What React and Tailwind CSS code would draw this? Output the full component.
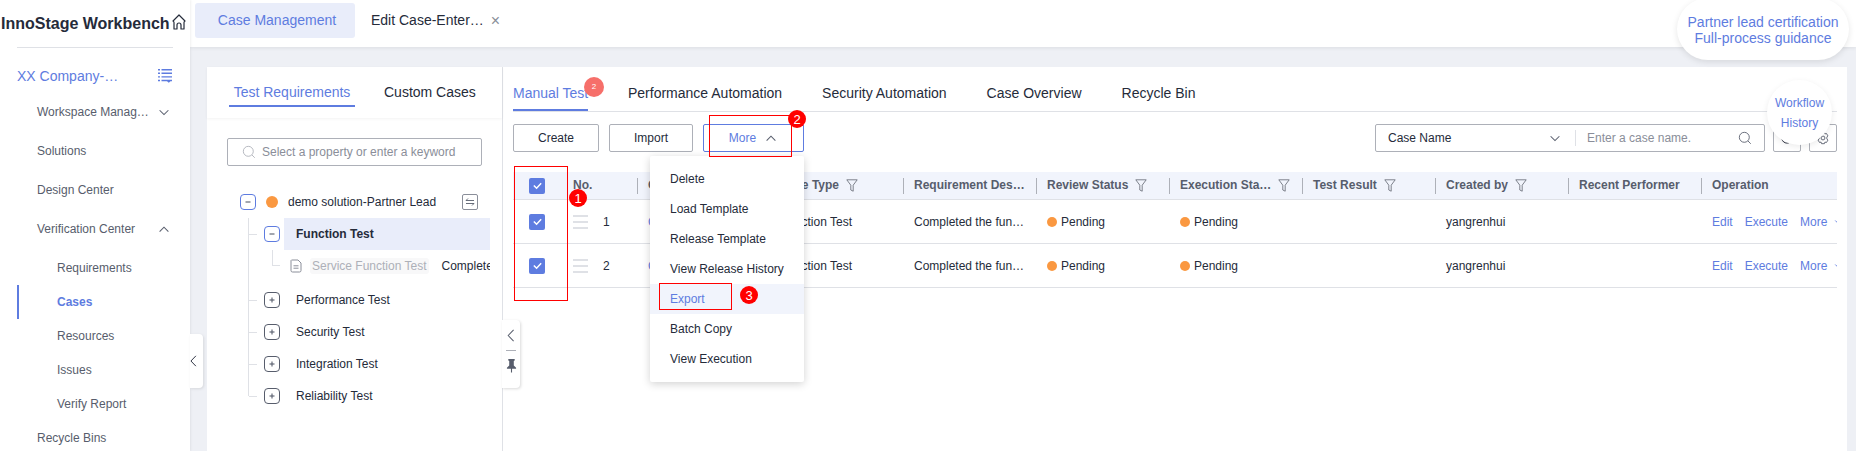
import React from "react";

const Chevron = ({ up, className = "" }) => (
  <svg viewBox="0 0 16 16" className={className} fill="none" stroke="currentColor" strokeWidth="1.2">
    <path d={up ? "M3 11 L8 6 L13 11" : "M3 6 L8 11 L13 6"} />
  </svg>
);

const TallLeft = ({ className = "" }) => (
  <svg viewBox="0 0 8 14" className={className} fill="none" stroke="currentColor" strokeWidth="1.1">
    <path d="M6.8 1 L1 7 L6.8 13" />
  </svg>
);

const Filter = () => (
  <svg viewBox="0 0 12 13" className="w-3 h-[13px] shrink-0 ml-[7px] text-[#71757f]" fill="none" stroke="currentColor" strokeWidth="0.9">
    <path d="M0.8 0.8 H11.2 L7.2 6.2 V12.2 L4.8 11 V6.2 Z" />
  </svg>
);

const Search = ({ className = "" }) => (
  <svg viewBox="0 0 16 16" className={className} fill="none" stroke="currentColor" strokeWidth="1">
    <circle cx="7.2" cy="7.2" r="5.7" />
    <path d="M11.4 11.4 L14.6 14.6" />
  </svg>
);

const Step = ({ n, className }) => (
  <div className={`absolute w-[18px] h-[18px] rounded-full bg-[#ff0000] text-white text-[13px] flex items-center justify-center leading-none ${className}`}>{n}</div>
);

const RedBox = ({ className }) => <div className={`absolute border border-[#ff0000] ${className}`} />;

const Check = () => (
  <div className="w-4 h-4 rounded-[2px] bg-[#5e7ce0] flex items-center justify-center shrink-0">
    <svg viewBox="0 0 12 12" className="w-[11px] h-[11px]" fill="none" stroke="white" strokeWidth="1.6">
      <path d="M2 6 L5 9 L10 3.5" />
    </svg>
  </div>
);

const Sidebar = () => (
  <div className="w-[190px] shrink-0 bg-white h-full flex flex-col shadow-[1px_0_2px_rgba(0,0,0,0.06)] relative z-20 overflow-hidden">
    <div className="h-[47px] shrink-0 flex items-center justify-between pl-[1px] pr-[4px]">
      <span className="text-[16px] font-bold text-[#252b3a] whitespace-nowrap">InnoStage Workbench</span>
      <svg viewBox="0 0 14 16" className="w-[14px] h-[16px] -mt-[3px] text-[#252b3a]" fill="none" stroke="currentColor" strokeWidth="1.2">
        <path d="M7 1 L1 7 Q2 7.8 2 8.6 V15 H5 V11 A2 2 0 0 1 9 11 V15 H12 V8.6 Q12 7.8 13 7 Z" strokeLinejoin="round" />
      </svg>
    </div>
    <div className="h-px bg-[#dfe1e6] mx-[17px] shrink-0" />
    <div className="flex items-center justify-between pl-[17px] pr-[18px] h-[28px] mt-[14px] shrink-0">
      <span className="text-[14px] text-[#5e7ce0]">XX Company-…</span>
      <svg viewBox="0 0 14 15" className="w-[14px] h-[15px] -mt-[2px] text-[#5e7ce0]" fill="currentColor">
        <path d="M0 1h2v1.4H0zM3.5 1H14v1.4H3.5zM0 4.6h2V6H0zM3.5 4.6H14V6H3.5zM0 8.2h2v1.4H0zM3.5 8.2H14v1.4H3.5zM0 11.8h2v1.4H0zM3.5 11.8H14v1.4H3.5zM9 13.2h3.5l-1.7 1.6z" />
      </svg>
    </div>
    <div className="text-[12px] text-[#575d6c] flex flex-col">
      <div className="h-[39px] mt-[2px] pl-[37px] pr-[19px] flex items-center justify-between">
        <span>Workspace Manag…</span><Chevron className="w-[14px] h-[14px]" />
      </div>
      <div className="h-[39px] pl-[37px] flex items-center">Solutions</div>
      <div className="h-[39px] pl-[37px] flex items-center">Design Center</div>
      <div className="h-[39px] pl-[37px] pr-[19px] flex items-center justify-between">
        <span>Verification Center</span><Chevron up className="w-[14px] h-[14px]" />
      </div>
      <div className="h-[34px] mt-[3px] pl-[57px] flex items-center">Requirements</div>
      <div className="h-[34px] ml-[17px] pl-[38px] flex items-center border-l-2 border-[#5e7ce0] font-bold text-[#5e7ce0]">Cases</div>
      <div className="h-[34px] pl-[57px] flex items-center">Resources</div>
      <div className="h-[34px] pl-[57px] flex items-center">Issues</div>
      <div className="h-[34px] pl-[57px] flex items-center">Verify Report</div>
      <div className="h-[34px] pl-[37px] flex items-center">Recycle Bins</div>
    </div>
  </div>
);

const TopBar = () => (
  <div className="h-[47px] shrink-0 bg-white shadow-[0_1px_4px_rgba(0,0,0,0.08)] flex items-start pl-[5px] pt-[3px] relative z-10">
    <div className="w-[160px] h-[35px] rounded-[3px] bg-[#e9edfa] text-[#5e7ce0] text-[14px] flex items-center justify-center pl-[4px]">Case Management</div>
    <div className="h-[35px] ml-[16px] flex items-center text-[14px] text-[#252b3a] whitespace-nowrap">
      Edit Case-Enter…<span className="ml-[7px] text-[#8a8e99] text-[16px] leading-none">×</span>
    </div>
  </div>
);

const TreeBox = ({ minus, blue }) => (
  <div className={`w-4 h-4 rounded-[4px] border flex items-center justify-center shrink-0 bg-white ${blue ? "border-[#5e7ce0]" : "border-[#575d6c]"}`}>
    <svg viewBox="0 0 8 8" className="w-2 h-2 text-[#575d6c]" fill="none" stroke="currentColor" strokeWidth="1.1">
      <path d="M1.5 4 H6.5" />
      {!minus && <path d="M4 1.5 V6.5" />}
    </svg>
  </div>
);

const Stub = () => (
  <div className="w-[15px] shrink-0 flex items-center">
    <div className="w-[8px] h-px bg-[#dfe1e6]" />
  </div>
);

const TreeRow = ({ label }) => (
  <div className="h-[32px] shrink-0 flex items-center">
    <Stub />
    <TreeBox />
    <span className="ml-[16px] text-[12px] text-[#252b3a]">{label}</span>
  </div>
);

const LeftPanel = () => (
  <div className="w-[296px] shrink-0 h-full flex flex-col border-r border-[#dfe1e6] relative">
    <div className="h-[51px] shrink-0 flex items-start pl-[22px] shadow-[0_1px_3px_rgba(0,0,0,0.05)]">
      <div className="w-[126px] h-[40px] border-b-2 border-[#5e7ce0] flex items-end justify-center pb-[2px] text-[14px] text-[#5e7ce0]">Test Requirements</div>
      <div className="ml-[29px] h-[40px] flex items-end pb-[4px] text-[14px] text-[#252b3a]">Custom Cases</div>
    </div>
    <div className="mx-[20px] mt-[20px] h-[28px] shrink-0 border border-[#adb0b8] rounded-[2px] flex items-center pl-[14px] text-[12px] text-[#8a8e99]">
      <Search className="w-[14px] h-[14px] mr-[6px] text-[#adb0b8]" />
      Select a property or enter a keyword
    </div>
    <div className="mt-[24px] pl-[33px] flex flex-col">
      <div className="h-[24px] flex items-center pr-[24px]">
        <TreeBox minus blue />
        <div className="w-3 h-3 rounded-full bg-[#fa9841] ml-[10px] shrink-0" />
        <span className="ml-[10px] text-[12px] text-[#252b3a] grow">demo solution-Partner Lead</span>
        <div className="w-4 h-4 border border-[#8a8e99] rounded-[2px] flex items-center justify-center">
          <svg viewBox="0 0 12 12" className="w-3 h-3 text-[#575d6c]" fill="none" stroke="currentColor" strokeWidth="0.9">
            <path d="M2 4.5 H10 M4 2.5 L2 4.5 M2 7.5 H10 M8 9.5 L10 7.5" />
          </svg>
        </div>
      </div>
      <div className="ml-[8px] border-l border-[#dfe1e6] h-[178px] mt-[4px] flex flex-col">
        <div className="h-[32px] shrink-0 flex items-center pr-[12px]">
          <Stub />
          <TreeBox minus blue />
          <div className="ml-[4px] pl-[12px] h-full grow flex items-center bg-[#e9edfa] text-[12px] font-bold text-[#252b3a]">Function Test</div>
        </div>
        <div className="h-[32px] shrink-0 flex items-center overflow-hidden mr-[12px]">
          <div className="ml-[23px] w-[8px] h-[16px] -mt-[16px] border-l border-b border-[#dfe1e6] shrink-0" />
          <svg viewBox="0 0 12 14" className="w-[12px] h-[14px] ml-[10px] shrink-0 text-[#8a8e99]" fill="none" stroke="currentColor" strokeWidth="1">
            <path d="M1.5 1 H8 L11 4 V11.5 Q11 13 9.5 13 H2.5 Q1 13 1 11.5 V1.5 Z M3.5 6.8 H8.5 M3.5 9.2 H8.5" />
          </svg>
          <span className="ml-[8px] px-[2px] rounded-[3px] bg-[#f8f8f9] text-[12px] leading-[16px] text-[#adb0b8] whitespace-nowrap">Service Function Test</span>
          <span className="ml-[13px] text-[12px] text-[#252b3a] whitespace-nowrap">Completed the</span>
        </div>
        <div className="h-[2px] shrink-0" />
        <TreeRow label="Performance Test" />
        <TreeRow label="Security Test" />
        <TreeRow label="Integration Test" />
        <TreeRow label="Reliability Test" />
      </div>
    </div>
    <div className="absolute right-[-18px] top-[253px] w-[18px] h-[68px] bg-white rounded-r-[4px] shadow-[1px_1px_3px_rgba(0,0,0,0.15)] flex flex-col items-center pt-[9px] z-10">
      <TallLeft className="w-[8px] h-[13px] text-[#575d6c]" />
      <div className="w-[10px] h-px bg-[#adb0b8] mt-[8px]" />
      <svg viewBox="0 0 12 16" className="w-[11px] h-[15px] mt-[7px] text-[#575d6c]" fill="currentColor">
        <path d="M2.5 1 H9.5 V2.5 L8.5 3 V8 L11 10.5 V11.5 H6.6 V15.5 H5.4 V11.5 H1 V10.5 L3.5 8 V3 L2.5 2.5 Z" />
      </svg>
    </div>
  </div>
);

const cols = [
  { w: 133, label: "Requirement Des…" },
  { w: 133, label: "Review Status", f: 1 },
  { w: 133, label: "Execution Sta…", f: 1 },
  { w: 133, label: "Test Result", f: 1 },
  { w: 133, label: "Created by", f: 1 },
  { w: 133, label: "Recent Performer" },
  { w: 136, label: "Operation" },
];

const Sep = () => <div className="absolute left-0 top-[6px] h-[16px] w-px bg-[#adb0b8]" />;

const Pending = () => (
  <div className="flex items-center text-[#252b3a]">
    <div className="w-[10px] h-[10px] rounded-full bg-[#fa9841] mr-[4px]" />
    Pending
  </div>
);

const Row = ({ n }) => (
  <div className="h-[44px] flex items-center border-b border-[#dfe1e6] text-[12px] text-[#252b3a]">
    <div className="w-[124px] shrink-0 flex items-center pl-[16px]">
      <Check />
      <div className="ml-[28px] w-[15px] flex flex-col gap-[4px]">
        <div className="h-[2px] bg-[#dfe1e6]" /><div className="h-[2px] bg-[#dfe1e6]" /><div className="h-[2px] bg-[#dfe1e6]" />
      </div>
      <span className="ml-[15px]">{n}</span>
    </div>
    <div className="w-[266px] shrink-0 pl-[11px] flex items-center justify-between pr-[51px]">
      <span className="text-[#5e7ce0]">C</span><span>Function Test</span>
    </div>
    <div className="w-[133px] shrink-0 pl-[11px]">Completed the fun…</div>
    <div className="w-[133px] shrink-0 pl-[11px]"><Pending /></div>
    <div className="w-[133px] shrink-0 pl-[11px]"><Pending /></div>
    <div className="w-[133px] shrink-0" />
    <div className="w-[133px] shrink-0 pl-[11px]">yangrenhui</div>
    <div className="w-[133px] shrink-0" />
    <div className="w-[136px] shrink-0 pl-[11px] flex items-center text-[#5e7ce0] overflow-hidden whitespace-nowrap">
      <span>Edit</span><span className="ml-[12px]">Execute</span><span className="ml-[12px]">More</span>
      <Chevron className="w-[12px] h-[12px] ml-[6px] shrink-0" />
    </div>
  </div>
);

const menuItems = ["Delete", "Load Template", "Release Template", "View Release History", "Export", "Batch Copy", "View Execution"];

const RightPanel = () => (
  <div className="grow min-w-0 h-full pl-[10px] pr-[10px] flex flex-col relative">
    <div className="h-[45px] shrink-0 flex items-end border-b border-[#dfe1e6] text-[14px] text-[#252b3a]">
      <div className="h-[44px] w-[75px] border-b-[2px] border-[#5e7ce0] flex items-end pb-[5px] text-[#5e7ce0] whitespace-nowrap">Manual Test</div>
      <div className="ml-[40px] pb-[7px]">Performance Automation</div>
      <div className="ml-[40px] pb-[7px]">Security Automation</div>
      <div className="ml-[40px] pb-[7px]">Case Overview</div>
      <div className="ml-[40px] pb-[7px]">Recycle Bin</div>
    </div>
    <div className="mt-[12px] h-[28px] shrink-0 flex items-center text-[12px]">
      <div className="w-[86px] h-full border border-[#adb0b8] rounded-[2px] flex items-center justify-center text-[#252b3a]">Create</div>
      <div className="w-[84px] h-full ml-[10px] border border-[#adb0b8] rounded-[2px] flex items-center justify-center text-[#252b3a]">Import</div>
      <div className="w-[101px] h-full ml-[10px] border border-[#5e7ce0] rounded-[2px] flex items-center justify-center text-[#5e7ce0]">
        More<Chevron up className="w-[14px] h-[14px] ml-[8px] text-[#575d6c]" />
      </div>
      <div className="grow" />
      <div className="w-[390px] h-full border border-[#adb0b8] rounded-[2px] flex items-center pl-[12px] pr-[12px] text-[#252b3a]">
        <span>Case Name</span>
        <div className="grow" />
        <Chevron className="w-[14px] h-[14px] text-[#575d6c]" />
        <div className="w-px h-[16px] bg-[#dfe1e6] ml-[13px] mr-[11px]" />
        <span className="text-[#8a8e99] w-[151px]">Enter a case name.</span>
        <Search className="w-[14px] h-[14px] text-[#575d6c]" />
      </div>
      <div className="w-[28px] h-full ml-[8px] border border-[#adb0b8] rounded-[2px] flex items-center justify-center">
        <svg viewBox="0 0 16 16" className="w-[14px] h-[14px] text-[#252b3a]" fill="none" stroke="currentColor" strokeWidth="1.1">
          <path d="M14 8 A6 6 0 1 1 11.5 3 M11.5 1 V3.4 H14" />
        </svg>
      </div>
      <div className="w-[28px] h-full ml-[8px] border border-[#adb0b8] rounded-[2px] flex items-center justify-center">
        <svg viewBox="0 0 16 16" className="w-[14px] h-[14px] text-[#575d6c]" fill="none" stroke="currentColor" strokeWidth="1">
          <path d="M6.4 1.5 H9.6 L10.2 3.3 L12 2.9 L13.6 5.6 L12.4 7 V9 L13.6 10.4 L12 13.1 L10.2 12.7 L9.6 14.5 H6.4 L5.8 12.7 L4 13.1 L2.4 10.4 L3.6 9 V7 L2.4 5.6 L4 2.9 L5.8 3.3 Z" strokeLinejoin="round" /><circle cx="8" cy="8" r="2.2" />
        </svg>
      </div>
    </div>
    <div className="mt-[20px] h-[28px] shrink-0 flex items-center bg-[#f1f4fc] border-b border-[#dfe1e6] text-[12px] font-bold text-[#575d6c]">
      <div className="w-[124px] h-full shrink-0 flex items-center pl-[16px]">
        <Check />
        <span className="ml-[28px] -mt-[1px]">No.</span>
      </div>
      <div className="w-[266px] h-full shrink-0 relative flex items-center pl-[11px] pr-[45px] justify-between">
        <Sep />
        <span className="-mt-[1px]">Case ID</span>
        <span className="flex items-center -mt-[1px]">Case Type<Filter /></span>
      </div>
      {cols.map((c) => (
        <div key={c.label} style={{ width: c.w }} className="h-full shrink-0 relative flex items-center pl-[11px] pb-[1px]">
          <Sep />
          <span className="whitespace-nowrap">{c.label}</span>
          {c.f ? <Filter /> : null}
        </div>
      ))}
    </div>
    <Row n="1" />
    <Row n="2" />

    <div className="absolute left-[147px] top-[89px] w-[154px] h-[226px] bg-white rounded-[2px] shadow-[0_2px_8px_rgba(0,0,0,0.18)] py-[8px] z-30 text-[12px] text-[#252b3a]">
      {menuItems.map((m) => (
        <div key={m} className={`h-[30px] pl-[20px] flex items-center ${m === "Export" ? "bg-[#f1f4fc] text-[#5e7ce0]" : ""}`}>{m}</div>
      ))}
    </div>
    <div className="absolute left-[81px] top-[10px] w-[20px] h-[20px] rounded-full bg-[#f66f6a] text-white text-[8px] flex items-center justify-center z-30">2</div>
    <RedBox className="left-[11px] top-[99px] w-[54px] h-[135px] z-40" />
    <RedBox className="left-[206px] top-[48px] w-[83px] h-[42px] z-40" />
    <RedBox className="left-[156px] top-[216px] w-[73px] h-[27px] z-40" />
    <Step n="1" className="left-[66px] top-[122px] z-40" />
    <Step n="2" className="left-[285px] top-[43px] z-40" />
    <Step n="3" className="left-[237px] top-[219px] z-40" />
  </div>
);

export default function App() {
  return (
    <div className="relative w-[1856px] h-[451px] overflow-hidden bg-[#eef0f5] flex font-['Liberation_Sans',Arial,sans-serif]">
      <Sidebar />
      <div className="grow min-w-0 h-full flex flex-col">
        <TopBar />
        <div className="mt-[20px] ml-[17px] mr-[9px] grow min-h-0 bg-white flex">
          <LeftPanel />
          <RightPanel />
        </div>
      </div>

      <div className="absolute left-[190px] top-[334px] w-[13px] h-[54px] bg-white rounded-r-[4px] shadow-[1px_1px_3px_rgba(0,0,0,0.1)] flex items-center z-30">
        <TallLeft className="w-[7px] h-[12px] text-[#252b3a]" />
      </div>
      <div className="absolute left-[1677px] top-[-2px] w-[172px] h-[62px] rounded-full bg-white shadow-[0_2px_6px_rgba(0,0,0,0.1)] flex flex-col items-center justify-center text-[14px] leading-[16px] text-[#5e7ce0] z-30 pt-[2px]">
        <span>Partner lead certification</span>
        <span>Full-process guidance</span>
      </div>
      <div className="absolute left-[1767px] top-[80px] w-[65px] h-[65px] rounded-full bg-white shadow-[0_2px_6px_rgba(0,0,0,0.08)] flex flex-col items-center justify-center text-[12px] leading-[20px] text-[#5e7ce0] z-30">
        <span>Workflow</span>
        <span>History</span>
      </div>
    </div>
  );
}
